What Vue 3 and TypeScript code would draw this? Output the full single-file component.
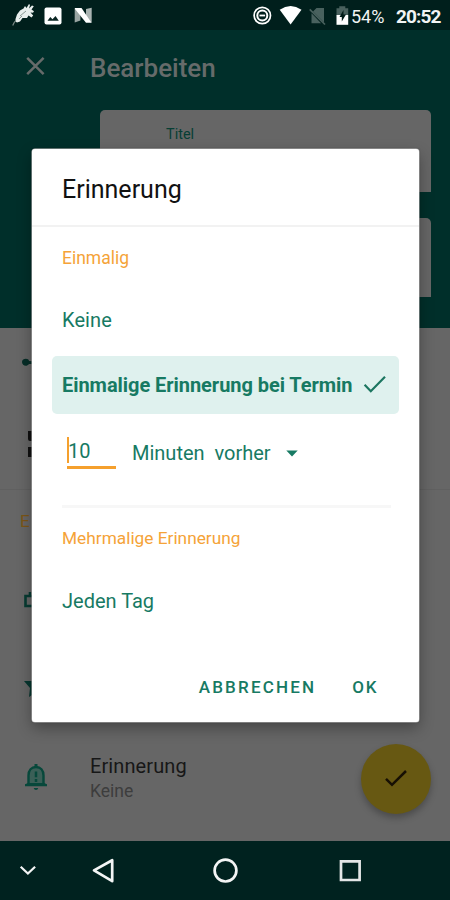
<script setup lang="ts">
import { ref } from 'vue'

const amount = ref<string>('10')
const selected = ref<string>('Einmalige Erinnerung bei Termin')
</script>

<template>
  <div class="screen">
    <header class="status">
      <svg class="notes" width="100" height="30" viewBox="0 0 100 30">
        <path d="M15.5 19 17 14.5 20 10.5 23.5 8.5 25 6 26.5 8 29 4 30 5 29 8.5 32 5.5 33.8 6.2 31.5 9.5 34 11.2 33 12.8 30.5 12.5 33.2 15.5 31.5 17.5 28.5 15.5 27 18 22.5 18 20 21.5 17 22.5 15.4 21.5Z" fill="#e8eeed" />
        <path d="m15.8 20.5-1.6 2-1.5 3" fill="none" stroke="#7d8b88" stroke-width="1.2" />
        <path d="m20 16 6-5M19 19l3-3" stroke="#8a9996" stroke-width="1" />
        <rect x="44.5" y="7.5" width="17" height="17" rx="2" fill="#fff" />
        <path d="m47.5 20.8 2.8-3.7 2.2 2.2 3-3.4 3.3 4.9Z" fill="#0a2623" />
        <path d="M74.7 8v14.5l5.7-2V10Z" fill="#9aa5a3" />
        <path d="m86 9 5.7-1.2v15L86 20Z" fill="#aab4b2" />
        <path d="M75 8h6.5l10 14.8H86L75 8.9Z" fill="#fff" />
      </svg>
      <div class="system">
        <svg width="139" height="30" viewBox="245 0 139 30">
          <g fill="none" stroke="#fff">
            <circle cx="262.3" cy="15.5" r="8.2" stroke-width="1.7" />
            <circle cx="262.3" cy="15.5" r="5" stroke-width="2" />
            <path d="M259.5 15.5h5.6" stroke-width="1.8" />
          </g>
          <path d="M279.7 9.7Q290.6 2.5 301.5 9.7L290.6 24.5Z" fill="#fff" />
          <path d="M313 11.5 316.5 8H324v14.6Zm-1.5 1.7 9.6 10H311.5Z" fill="#49615e" />
          <path d="m309.7 9.3 15.3 15.2" stroke="#49615e" stroke-width="1.7" />
          <path d="M336.5 8.3h2.8V6.2h6v2.1h2.9v7h-11.7Z" fill="#49615e" />
          <path d="M336.5 15h11.7v9.8h-11.7Z" fill="#fff" />
          <path d="m343.5 10-4 7h2.3v4.6l4.2-7.2h-2.5Z" fill="#001b18" />
        </svg>
        <span class="battery">54%</span>
        <time class="clock">20:52</time>
      </div>
    </header>

    <main class="page">
      <section class="hero">
        <div class="toolbar">
          <svg width="20" height="20" viewBox="0 0 20 20"><path d="m2.2 1.8 16.4 16.4M18.6 1.8 2.2 18.2" stroke="#666b6a" stroke-width="2.5" /></svg>
          <h1>Bearbeiten</h1>
        </div>
        <div class="fields">
          <label class="field">Titel</label>
          <div class="field second"></div>
        </div>
      </section>
      <section class="list">
        <div class="row tag"><svg width="24" height="12" viewBox="0 0 24 12"><path d="M0 5C0 1 7 1 7 4l17 1v2L7 7C5 10 0 9 0 5Z" fill="#062d27" /></svg></div>
        <div class="row grid"><svg width="20" height="26" viewBox="0 0 20 26"><path d="M1 0h8v10H3Q1 10 1 8ZM1 16h8v10H1Z" fill="#111" /></svg></div>
        <div class="row extra">E</div>
        <div class="row"><svg width="22" height="18" viewBox="0 0 22 18"><path d="M1.5 5h19v10h-19ZM6 1v4" fill="none" stroke="#073b32" stroke-width="2.6" /></svg></div>
        <div class="row star"><svg width="22" height="20" viewBox="0 0 22 20"><path d="M0 2h22l-7 6 2 10-6-4-6 4 1-9Z" fill="#06362f" /></svg></div>
        <div class="row reminder">
          <svg class="bell" width="22" height="28" viewBox="1 1 22 28">
            <path d="M4.5 23V13.5C4.5 8 7.5 5 12 5s7.5 3 7.5 8.5V23" fill="#3b5f57" stroke="#07483b" stroke-width="2.4" />
            <path d="M1 24.3v-2.1l3-1.3h16l3 1.3v2.1ZM10.5 2h3v3.5h-3ZM9.7 26h4.6q-.5 2-2.3 2t-2.3-2Z" fill="#07483b" />
            <path d="M12 9.5v5.8M12 17v3" stroke="#07483b" stroke-width="2.5" />
          </svg>
          <div class="copy"><strong>Erinnerung</strong><span>Keine</span></div>
          <button class="fab" aria-label="Speichern"><svg width="24" height="20" viewBox="0 0 24 20"><path d="m2 9.8 6 6L22 2" fill="none" stroke="#171004" stroke-width="2.5" /></svg></button>
        </div>
      </section>
    </main>

    <nav class="nav">
      <svg width="450" height="60" viewBox="0 0 450 60" fill="none" stroke="#f3f5f5" stroke-width="2.7">
        <path d="m20.7 25.8 7.2 6.8 7.2-6.8" stroke-width="2.2" />
        <path d="M94 29.4 112.2 19.2v21Z" stroke-linejoin="round" />
        <circle cx="225.5" cy="29.6" r="10.9" />
        <path d="M341 20.4h18.6V39H341Z" stroke="#e3e6e6" />
      </svg>
    </nav>

    <div class="dialog" role="dialog">
      <h2>Erinnerung</h2>
      <div class="content">
        <h3>Einmalig</h3>
        <button class="option">Keine</button>
        <button class="option chosen">
          <span>{{ selected }}</span>
          <svg width="24" height="20" viewBox="0 0 24 20"><path d="m1.6 9.8 6.2 6.4L22 1.8" fill="none" stroke="#1c7660" stroke-width="2.2" /></svg>
        </button>
        <div class="custom">
          <div class="amount"><i></i><span>{{ amount }}</span></div>
          <div class="unit">Minuten&nbsp; vorher</div>
          <svg width="12" height="7" viewBox="0 0 12 7"><path d="M.3.5h11.4L6 6.5Z" fill="#177a63" /></svg>
        </div>
        <hr />
        <h3 class="multi">Mehrmalige Erinnerung</h3>
        <button class="option daily">Jeden Tag</button>
      </div>
      <footer><button class="cancel">ABBRECHEN</button><button class="ok">OK</button></footer>
    </div>
  </div>
</template>

<style>
body { margin: 0; }
</style>

<style scoped>
* { box-sizing: border-box; }
.screen { position: relative; display: flex; flex-direction: column; width: 450px; height: 900px; overflow: hidden; background: #666; font-family: Roboto, sans-serif; }
svg { display: block; flex: none; }
h1, h2, h3, hr { margin: 0; }
button { border: 0; padding: 0; background: none; font-family: inherit; color: inherit; text-align: left; }
.status { display: flex; justify-content: space-between; height: 30px; background: #001f1c; color: #f2f4f4; }
.system { display: flex; width: 205px; }
.system svg { margin-right: -33px; }
.battery { width: 45px; font-size: 18px; line-height: 33px; white-space: nowrap; }
.clock { font-size: 19px; line-height: 33px; font-weight: 700; letter-spacing: -.9px; white-space: nowrap; }
.page { flex: none; height: 811px; }
.hero { height: 298px; background: #002f2a; }
.toolbar { display: flex; align-items: center; height: 74px; padding-left: 25px; gap: 45px; }
.toolbar svg { margin-top: -2px; }
h1 { padding-top: 1px; color: #666b6a; font-size: 26px; line-height: 30px; font-weight: 500; }
.fields { display: flex; flex-direction: column; gap: 26px; padding: 6px 19px 0 100px; }
.field { height: 82px; border-radius: 5px 5px 0 0; background: #666; color: #073e34; padding: 15px 66px; font-size: 14.5px; line-height: 19px; }
.second { height: 79px; }
.list { display: flex; flex-direction: column; height: 513px; background: #666; }
.row { display: flex; align-items: center; height: 80px; padding-left: 24px; }
.tag { height: 70px; padding-left: 22px; }
.grid { height: 92px; padding-left: 27px; border-bottom: 1px solid #606060; }
.extra { height: 62px; padding-left: 20px; color: #7b5516; font-size: 17px; }
.row:nth-child(4) { height: 96px; }
.star { height: 82px; }
.reminder { height: 98px; }
.bell { margin: -4px 1px 0; }
.copy { display: flex; flex-direction: column; width: 271px; margin-left: 42px; }
.copy strong { color: #171717; font-size: 20px; line-height: 24px; font-weight: 400; letter-spacing: .1px; }
.copy span { color: #3d3d3d; font-size: 17.5px; line-height: 26px; }
.fab { display: flex; align-items: center; justify-content: center; flex: none; width: 70px; height: 70px; border-radius: 50%; background: #675812; box-shadow: 0 4px 7px #0004; }
.nav { height: 59px; background: #00221f; }
.dialog { position: absolute; left: 32px; top: 149px; width: 387px; height: 573px; border-radius: 3px; background: #fff; box-shadow: 0 0 0 .5px #bbb, 0 6px 15px #0005, 0 0 2px #0008; display: flex; flex-direction: column; }
h2 { height: 78px; border-bottom: 2px solid #f2f2f2; padding: 26px 30px 0; color: #111; font-size: 25px; line-height: 30px; font-weight: 400; }
.content { display: flex; flex-direction: column; height: 419px; padding: 0 20px; }
h3 { height: 62px; padding: 20px 10px 0; color: #f5a338; font-size: 17.5px; line-height: 22px; font-weight: 400; }
.option { padding: 0 10px 4px; height: 67px; color: #177a63; font-size: 20px; line-height: 57px; letter-spacing: .1px; white-space: nowrap; }
.chosen { display: flex; align-items: center; gap: 11px; height: 58px; padding-bottom: 0; border-radius: 5px; background: #dff1ee; line-height: 58px; font-weight: 700; letter-spacing: -.05px; }
.custom { display: flex; height: 91px; color: #177a63; font-size: 20px; }
.amount { display: flex; width: 49px; height: 32px; margin: 23px 16px 0 15px; border-bottom: 3px solid #f5a02d; line-height: 28px; }
.amount i { width: 2px; height: 26px; background: #f5a02d; }
.amount span { margin-left: -1px; }
.unit { width: 154px; line-height: 78px; white-space: nowrap; }
.custom svg { margin-top: 36px; }
hr { border: 0; height: 3px; margin: 0 8px 0 10px; background: #f7f7f7; }
.multi { height: 60px; padding-top: 19px; font-size: 17.3px; }
.daily { height: 66px; padding-bottom: 0; line-height: 63px; letter-spacing: 0; }
footer { display: flex; justify-content: flex-end; gap: 36px; height: 76px; padding-right: 41px; color: #177a63; }
footer button { height: 82px; font-size: 17px; font-weight: 500; line-height: 82px; }
.cancel { letter-spacing: 2.2px; }
.ok { letter-spacing: 1.6px; }
</style>
